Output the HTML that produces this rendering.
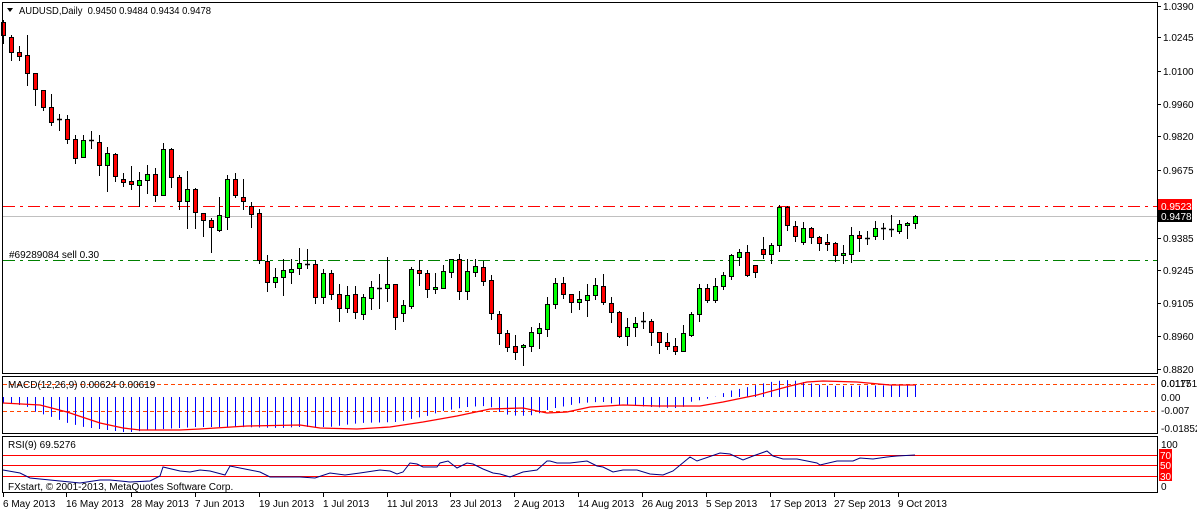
<!DOCTYPE html>
<html><head><meta charset="utf-8"><style>
html,body{margin:0;padding:0;background:#fff;}
svg{display:block;font-family:"Liberation Sans",sans-serif;font-size:10px;}
</style></head><body>
<svg id="s" width="1197" height="511" viewBox="0 0 1197 511" xmlns="http://www.w3.org/2000/svg">
<rect x="0" y="0" width="1197" height="511" fill="#fff"/>
<g id="g"></g>
<rect x="2.5" y="2.5" width="1155" height="371" fill="none" stroke="#000"/>
<rect x="2.5" y="376.5" width="1155" height="57" fill="none" stroke="#000"/>
<rect x="2.5" y="436.5" width="1155" height="56" fill="none" stroke="#000"/>
<path d="M7 8 L13 8 L10 12 Z" fill="#000"/>
<text x="19" y="14" fill="#000" textLength="192" lengthAdjust="spacingAndGlyphs">AUDUSD,Daily&#160; 0.9450 0.9484 0.9434 0.9478</text>
<text x="9" y="258" fill="#000">#69289084 sell 0.30</text>
<text x="8" y="388" fill="#000">MACD(12,26,9) 0.00624 0.00619</text>
<text x="8" y="448" fill="#000">RSI(9) 69.5276</text>
<text x="8" y="490" fill="#000">FXstart, © 2001-2013, MetaQuotes Software Corp.</text>
<g fill="#000">
<text x="1163" y="10">1.0390</text>
<text x="1163" y="41">1.0245</text>
<text x="1163" y="75">1.0100</text>
<text x="1163" y="108">0.9960</text>
<text x="1163" y="140">0.9820</text>
<text x="1163" y="174">0.9675</text>
<text x="1163" y="242">0.9385</text>
<text x="1163" y="274">0.9245</text>
<text x="1163" y="307">0.9105</text>
<text x="1163" y="340">0.8960</text>
<text x="1163" y="373">0.8820</text>
<text x="1161" y="387">0.0117</text>
<text x="1161" y="387">0.01751</text>
<text x="1161" y="401">0.00</text>
<text x="1161" y="414">-0.007</text>
<text x="1161" y="432">-0.01852</text>
<text x="1161" y="448">100</text>
<text x="1161" y="490">0</text>
</g>
<rect x="1158" y="199" width="34" height="13" fill="#f00"/>
<text x="1161" y="210" fill="#fff">0.9523</text>
<rect x="1158" y="210" width="34" height="12" fill="#000"/>
<text x="1161" y="220" fill="#fff">0.9478</text>
<rect x="1159" y="449" width="13" height="12" fill="#f00"/><text x="1160" y="459" fill="#fff">70</text>
<rect x="1159" y="460" width="13" height="11" fill="#f00"/><text x="1160" y="469" fill="#fff">50</text>
<rect x="1159" y="470" width="13" height="11" fill="#f00"/><text x="1160" y="480" fill="#fff">30</text>
<g fill="#000">
<text x="3" y="507">6 May 2013</text>
<text x="66" y="507">16 May 2013</text>
<text x="131" y="507">28 May 2013</text>
<text x="195" y="507">7 Jun 2013</text>
<text x="259" y="507">19 Jun 2013</text>
<text x="323" y="507">1 Jul 2013</text>
<text x="387" y="507">11 Jul 2013</text>
<text x="450" y="507">23 Jul 2013</text>
<text x="514" y="507">2 Aug 2013</text>
<text x="578" y="507">14 Aug 2013</text>
<text x="642" y="507">26 Aug 2013</text>
<text x="706" y="507">5 Sep 2013</text>
<text x="770" y="507">17 Sep 2013</text>
<text x="834" y="507">27 Sep 2013</text>
<text x="898" y="507">9 Oct 2013</text>
</g>
</svg>
<script>
var NS="http://www.w3.org/2000/svg",g=document.getElementById('g');
function el(t,a){var e=document.createElementNS(NS,t);for(var k in a)e.setAttribute(k,a[k]);g.appendChild(e);return e;}
el('line',{x1:3,y1:216.5,x2:1157,y2:216.5,stroke:'#c0c0c0'});
el('line',{x1:3,y1:206.5,x2:1157,y2:206.5,stroke:'#f00','stroke-dasharray':'12,5,3,5'});
el('line',{x1:3,y1:260.5,x2:1157,y2:260.5,stroke:'#008000','stroke-dasharray':'12,5,3,5'});
el('line',{x1:3,y1:384.5,x2:1157,y2:384.5,stroke:'#ff4500','stroke-dasharray':'4,3'});
el('line',{x1:3,y1:411.5,x2:1157,y2:411.5,stroke:'#ff4500','stroke-dasharray':'4,3'});
[455.5,465.5,476.5].forEach(function(y){el('line',{x1:3,y1:y,x2:1157,y2:y,stroke:'#f00'});});
[6,37,71,104,136,170,238,270,303,336,369].forEach(function(y){el('line',{x1:1157,y1:y+.5,x2:1161,y2:y+.5,stroke:'#000'});});
[3,66,131,195,259,323,387,450,514,578,642,706,770,834,898].forEach(function(x){el('line',{x1:x+.5,y1:493,x2:x+.5,y2:497,stroke:'#000'});});
var C=[[22,35,20,43,'r'],[37,52,35,60,'r'],[52,56,46,60,'r'],[55,73,35,85,'r'],[73,89,73,105,'r'],[90,107,90,110,'r'],[107,122,94,125,'r'],[119,119,114,130,'d'],[119,139,115,143,'r'],[139,158,135,163,'r'],
[140,157,135,157,'g'],[140,140,131,148,'d'],[142,165,135,175,'r'],[153,165,147,191,'g'],[154,176,153,181,'r'],[179,182,173,186,'r'],[181,184,166,189,'r'],[180,185,172,206,'g'],[174,180,165,193,'g'],[174,195,168,201,'r'],
[149,195,143,195,'g'],[149,177,148,187,'r'],[177,201,175,209,'r'],[189,201,171,228,'g'],[189,212,188,228,'r'],[213,220,213,236,'r'],[220,227,218,252,'r'],[215,230,197,231,'g'],[179,217,175,229,'g'],[179,195,173,197,'r'],
[197,201,179,209,'r'],[206,214,202,227,'r'],[213,260,209,263,'r'],[261,282,255,291,'r'],[277,282,268,287,'g'],[270,277,259,295,'g'],[269,272,259,283,'g'],[263,268,248,274,'g'],[264,264,249,268,'d'],[264,297,260,303,'r'],
[273,297,269,303,'g'],[273,294,270,299,'r'],[294,308,284,321,'r'],[295,308,286,312,'g'],[294,312,286,318,'r'],[297,314,294,319,'g'],[287,298,281,309,'g'],[288,288,274,308,'d'],[284,288,257,301,'g'],[284,317,284,329,'r'],
[305,313,300,321,'g'],[269,306,267,308,'g'],[270,273,260,285,'r'],[273,289,270,297,'r'],[287,289,273,293,'g'],[271,288,265,288,'g'],[259,272,259,277,'g'],[259,291,254,299,'r'],[271,291,259,299,'g'],[266,272,259,276,'g'],
[267,281,261,285,'r'],[280,313,275,319,'r'],[314,333,311,344,'r'],[333,347,330,351,'r'],[346,352,335,359,'r'],[345,347,344,365,'g'],[332,346,327,351,'g'],[328,333,323,348,'g'],[304,329,297,336,'g'],[283,304,278,308,'g'],
[283,294,277,298,'r'],[294,302,294,312,'r'],[299,302,291,309,'g'],[295,300,284,316,'g'],[285,295,278,299,'g'],[286,302,274,304,'r'],[303,312,297,322,'r'],[312,336,311,337,'r'],[327,336,318,345,'g'],[323,327,317,336,'g'],
[321,321,312,328,'d'],[321,332,319,345,'r'],[332,342,332,353,'r'],[342,346,333,349,'r'],[346,351,338,354,'r'],[333,351,325,351,'g'],[314,335,312,336,'g'],[288,314,284,321,'g'],[288,300,284,302,'r'],[286,300,278,302,'g'],
[275,286,272,289,'g'],[255,276,254,279,'g'],[252,257,249,265,'g'],[252,275,245,276,'r'],[265,272,265,277,'r'],[249,254,237,258,'r'],[245,254,243,263,'g'],[207,245,205,251,'g'],[207,225,206,230,'r'],[226,236,221,241,'r'],
[228,242,222,244,'g'],[228,237,227,243,'r'],[237,243,236,250,'r'],[242,244,234,250,'r'],[243,255,242,261,'r'],[253,255,245,263,'g'],[235,254,227,262,'g'],[235,238,231,251,'r'],[238,238,231,244,'d'],[228,236,221,239,'g'],
[228,228,223,239,'d'],[229,229,215,236,'d'],[224,231,220,233,'g'],[223,225,222,238,'g'],[216,223,215,228,'g']];
C.forEach(function(c,i){var x=3+8*i;
 el('line',{x1:x+.5,y1:c[2],x2:x+.5,y2:c[3]+1,stroke:'#000'});
 if(c[4]=='d'){el('line',{x1:x-2,y1:c[0]+.5,x2:x+3,y2:c[0]+.5,stroke:'#000','stroke-width':1.5});}
 else el('rect',{x:x-1.5,y:c[0]+.5,width:4,height:Math.max(1,c[1]-c[0]),fill:c[4]=='g'?'#00ff00':'#ff0000',stroke:'#000'});
});
function interp(P,x){if(x<=P[0][0])return P[0][1];for(var i=1;i<P.length;i++){if(x<=P[i][0]){var a=P[i-1],b=P[i];return a[1]+(b[1]-a[1])*(x-a[0])/(b[0]-a[0]);}}return P[P.length-1][1];}
var H=[[4,403],[20,405],[28,407],[36,412],[52,417],[60,420],[68,423],[76,425],[84,427],[100,429],[124,432],[132,432],[148,430],[196,427],[240,427],[280,428],[300,427],[330,427],[360,423],[395,422],[403,421],[411,419],[427,416],[443,411],[467,407],[483,406],[491,407],[503,414],[519,416],[535,415],[550,409],[566,406],[581,403],[597,402],[604,402],[620,405],[651,407],[674,408],[682,408],[690,402],[706,399],[713,398],[721,394],[729,391],[744,388],[760,384],[776,381],[790,380],[798,381],[814,384],[830,386],[915,385]];
for(var i=0;i<C.length;i++){var x=3+8*i+.5,y=interp(H,x);el('line',{x1:x,y1:397,x2:x,y2:y,stroke:'#0000ff'});}
var S=[[3,403],[40,405],[67,412],[100,423],[123,428],[140,430],[180,430],[200,429],[247,426],[300,425],[320,428],[357,429],[390,427],[423,422],[457,416],[490,409],[523,408],[547,413],[567,412],[590,407],[623,405],[657,406],[700,406],[723,402],[757,395],[790,386],[807,382],[823,381],[857,382],[890,385],[915,385]];
el('polyline',{points:S.map(function(p){return p.join(',')}).join(' '),fill:'none',stroke:'#f00','stroke-width':1.3});
var R=[[3,470],[20,473],[30,478],[60,481],[80,483],[100,480],[110,480],[130,482],[150,481],[160,476],[163,467],[180,471],[190,472],[200,470],[210,471],[225,475],[230,466],[250,470],[260,472],[270,477],[300,477],[315,478],[330,473],[345,475],[360,473],[380,470],[390,471],[397,474],[403,472],[410,463],[417,464],[423,467],[437,467],[440,463],[448,461],[457,468],[467,463],[473,464],[483,469],[493,473],[500,474],[510,477],[523,472],[530,471],[537,470],[547,461],[550,461],[557,463],[570,463],[587,461],[597,466],[603,467],[613,472],[623,470],[637,470],[650,474],[663,475],[673,471],[690,457],[697,461],[720,453],[730,454],[743,460],[753,456],[767,451],[773,456],[783,459],[797,459],[817,463],[820,465],[837,461],[853,461],[860,458],[873,459],[887,457],[897,456],[915,455]];
el('polyline',{points:R.map(function(p){return p.join(',')}).join(' '),fill:'none',stroke:'#000080','stroke-width':1});
</script>
</body></html>
